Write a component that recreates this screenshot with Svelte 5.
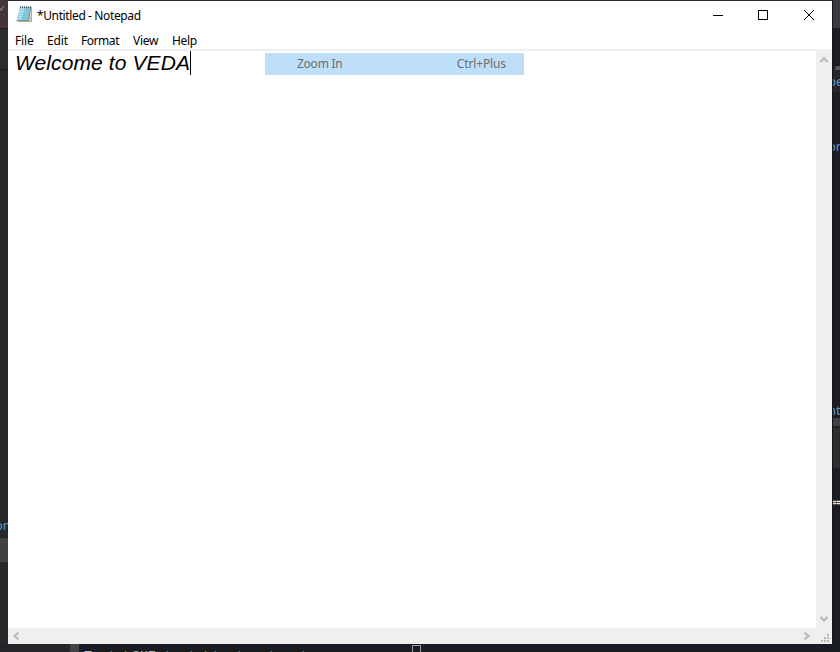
<script>
  const menus = [
    { label: 'File', width: 32, spacing: -0.15 },
    { label: 'Edit', width: 34, spacing: -0.15 },
    { label: 'Format', width: 52, spacing: -0.45 },
    { label: 'View', width: 39, spacing: -0.25 },
    { label: 'Help', width: 40, spacing: -0.3 }
  ];
  let text = 'Welcome to VEDA';
</script>

<div class="desktop">
  <aside class="left">
    <div class="tab"><svg width="8" height="28"><path d="M-1 7 L1 9 L4 5" fill="none" stroke="#8c8588" stroke-width="1.2" /></svg></div>
    <div class="strip"></div>
    <div class="editor"><span class="code">on</span></div>
    <div class="selected"></div>
  </aside>

  <main class="window">
    <header>
      <svg class="logo" width="17" height="18" viewBox="0 0 17 18">
        <path d="M4.5 2.5 H15.5 V16.5 H2 L1.5 15 Z" fill="#ddd2b5" stroke="#a89870" stroke-width=".8" />
        <path d="M4 2.5 H14.5 L12.6 15.5 H.6 Z" fill="#83cbdc" />
        <path d="M4 2.5 H9 L5 15.5 H.6 Z" fill="#b5e2eb" />
        <path d="M3.2 5.5H14M2.8 8H13.6M2.3 10.5H13.2M1.7 13H13" stroke="#5eafc4" stroke-width=".35" />
        <path d="M.6 15.5H12.6L14.5 3" fill="none" stroke="#508e9d" stroke-width=".8" />
        <path d="M4 2.2H15" stroke="#475c61" stroke-width="2" stroke-dasharray="1 1" />
      </svg>
      <h1>*Untitled - Notepad</h1>
      <div class="controls">
        <svg width="138" height="30" fill="none" stroke="#000" shape-rendering="crispEdges">
          <path d="M19 15.5h10M64.5 10.5h9v9h-9z" transform="translate(0 -1)" />
          <path d="M110 9.5l10 10M120 9.5l-10 10" shape-rendering="auto" transform="translate(0 -.5)" />
        </svg>
      </div>
    </header>
    <nav>
      {#each menus as menu}
        <span style:width="{menu.width}px" style:letter-spacing="{menu.spacing}px">{menu.label}</span>
      {/each}
    </nav>
    <section class="document">
      <div class="page">
        <p><span>{text}</span><i class="caret"></i></p>
        <div class="menu-item"><span>Zoom In</span><span class="key">Ctrl+Plus</span></div>
      </div>
      <div class="vscroll">
        <svg width="16" height="16"><path d="M4.5 11 L8 7.3 L11.5 11" /></svg>
        <svg width="16" height="16"><path d="M4.5 5 L8 8.7 L11.5 5" /></svg>
      </div>
    </section>
    <footer>
      <svg width="16" height="16"><path d="M10.5 4.5 L6.5 8 L10.5 11.5" /></svg>
      <div class="ends">
        <svg width="16" height="16"><path d="M5.5 4.5 L9.5 8 L5.5 11.5" /></svg>
        <svg width="16" height="16"><g><path d="M11 6h2v2h-2zM8 9h2v2h-2zM11 9h2v2h-2zM5 12h2v2h-2zM8 12h2v2h-2zM11 12h2v2h-2z" /></g></svg>
      </div>
    </footer>
  </main>

  <aside class="right">
    <div class="panel top"></div>
    <div class="panel line"></div>
    <div class="panel active"><span class="code">pe</span></div>
    <div class="panel source"><span class="code">or</span></div>
    <div class="panel rest"><span class="code">nt</span></div>
    <div class="panel divider"></div>
    <div class="panel block"></div>
    <div class="panel output"><span>==</span></div>
  </aside>

  <div class="terminal">
    <div class="gutter"></div>
    <div class="path">Tests<b>\</b>SHEatents<b>\</b>testsuntrest</div>
    <div class="cursor"></div>
  </div>
</div>

<style>
  :global(body) { margin: 0; overflow: hidden; }
  * { box-sizing: border-box; }
  .desktop {
    width: 840px; height: 652px; overflow: hidden;
    display: grid; grid-template: 1px 643px 8px / 8px 824px 8px;
    background: #2b2a2e;
    font-family: "Noto Sans", sans-serif; font-size: 12px;
  }
  svg { display: block; flex: none; }
  .left { grid-row: 1 / 3; overflow: hidden; background: #27282c; display: flex; flex-direction: column; }
  .tab { height: 28px; flex: none; background: #43343e; }
  .tab svg { margin-top: 1px; }
  .strip { height: 42px; flex: none; background: #2b2c30; border-top: 1px solid #202125; border-bottom: 1px solid #1c1d20; }
  .editor { height: 468px; flex: none; padding-top: 447px; }
  .selected { height: 24px; flex: none; background: #404145; }
  .code { display: block; font: 13px/17px "Noto Sans", sans-serif; color: #5599cf; }
  .left .code { margin-left: -5px; }

  .window { grid-row: 2; grid-column: 2; background: #fff; display: flex; flex-direction: column; color: #000; }
  header { height: 30px; display: flex; flex: none; }
  .logo { margin: 4px 0 0 8px; }
  h1 { margin: 0 0 0 4px; font-size: 12px; font-weight: 400; line-height: 30px; letter-spacing: -.38px; white-space: nowrap; }
  .controls { margin-left: auto; width: 138px; }
  nav { height: 18px; display: flex; padding-left: 7px; line-height: 20px; flex: none; }
  nav span { white-space: nowrap; }
  .document { height: 579px; display: flex; border-top: 2px solid #efefef; }
  .page { width: 808px; display: flex; align-items: flex-start; }
  p { margin: 0; width: 257px; height: 25px; padding-left: 7px; display: flex; font: italic 21px/24px "Liberation Sans", sans-serif; letter-spacing: .1px; white-space: nowrap; }
  .caret { width: 1px; height: 24px; background: #000; }
  .menu-item { margin-top: 2px; width: 259px; height: 22px; padding: 0 18px 0 32px; display: flex; justify-content: space-between; line-height: 22px; letter-spacing: -.25px; background: #bfdff8; color: #6d6d6d; }
  .key { letter-spacing: -.12px; }
  .vscroll { width: 16px; background: #efefef; display: flex; flex-direction: column; justify-content: space-between; }
  .vscroll path, footer path { fill: none; stroke: #bababa; stroke-width: 2.2; }
  footer g path { fill: #b8b8b8; stroke: none; }
  footer { height: 16px; background: #efefef; display: flex; justify-content: space-between; }
  .ends { display: flex; width: 33px; justify-content: space-between; }

  .right { grid-column: 3; grid-row: 1 / 3; overflow: hidden; background: #1b1d20; border-left: 1px solid #151618; }
  .top { height: 28px; background: #3b3c3f; }
  .line { height: 42px; padding-top: 38px; }
  .line::after { content: ""; display: block; height: 4px; margin-left: 2px; border-radius: 2px 0 0 0; background: #55565b; }
  .active { height: 22px; padding-top: 3px; background: #25272d; }
  .source { height: 310px; padding-top: 46px; }
  .rest { height: 16px; }
  .right .code { margin-left: -5px; }
  .divider { height: 10px; background: #404144; border-bottom: 2px solid #202123; }
  .block { height: 40px; background: #2c2d2f; }
  .output { height: 174px; padding-top: 28px; color: #e6e0d5; font: bold 9px/17px "Liberation Mono", monospace; }
  .output span { margin-left: -2px; -webkit-text-stroke: .4px #e6e0d5; }
  .terminal { grid-column: 1 / 4; grid-row: 3; background: #191c20; display: flex; height: 8px; overflow: hidden; }
  .gutter { width: 79px; border-left: 70px solid #252629; background: #424347; flex: none; }
  .path { width: 333px; padding: 4px 0 0 5px; flex: none; font: 13.33px/18px "Liberation Mono", monospace; color: #b1b1b2; white-space: nowrap; }
  .path b { font-weight: 400; color: #b18a4d; }
  .cursor { width: 9px; height: 15px; margin-top: 1px; border: 1px solid #9b9ca4; flex: none; }
</style>
